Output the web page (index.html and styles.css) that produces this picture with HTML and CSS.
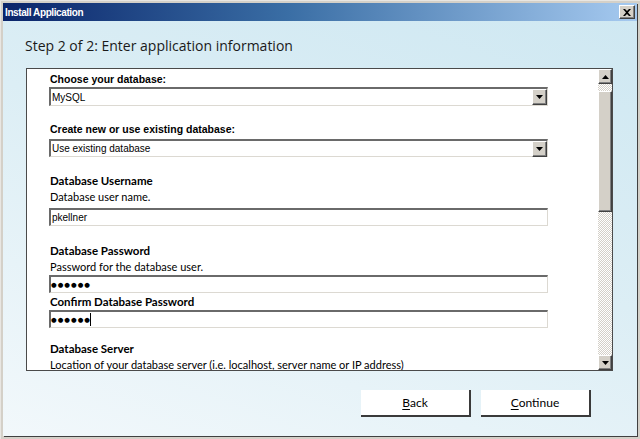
FILE: index.html
```html
<!DOCTYPE html>
<html>
<head>
<meta charset="utf-8">
<title>Install Application</title>
<link rel="stylesheet" href="styles.css">
</head>
<body>
<div class="window">
  <div class="inner">
    <div class="titlebar">
      <span class="title">Install Application</span>
      <span class="close"><svg width="8" height="7" viewBox="0 0 8 7"><path d="M0 0h2l2 2 2-2h2L5 3.5 8 7H6L4 5 2 7H0l3-3.5z" fill="#000"/></svg></span>
    </div>
    <div class="client">
      <h1 class="step">Step 2 of 2: Enter application information</h1>
      <div class="panel">
        <div class="form">
          <div class="label tahoma first">Choose your database:</div>
          <div class="combo c1"><span class="value">MySQL</span><span class="drop"><svg width="7" height="4" viewBox="0 0 7 4"><path d="M0 0h7L3.5 4z" fill="#000"/></svg></span></div>
          <div class="label tahoma l2">Create new or use existing database:</div>
          <div class="combo c2"><span class="value">Use existing database</span><span class="drop"><svg width="7" height="4" viewBox="0 0 7 4"><path d="M0 0h7L3.5 4z" fill="#000"/></svg></span></div>
          <div class="label l3">Database Username</div>
          <div class="desc">Database user name.</div>
          <div class="field f1"><span class="value">pkellner</span></div>
          <div class="label l4">Database Password</div>
          <div class="desc">Password for the database user.</div>
          <div class="field f2"><span class="value dots">●●●●●●</span></div>
          <div class="label l5">Confirm Database Password</div>
          <div class="field f3"><span class="value dots">●●●●●●</span><span class="caret"></span></div>
          <div class="label l6">Database Server</div>
          <div class="desc last">Location of your database server (i.e. localhost, server name or IP address)</div>
        </div>
        <div class="scrollbar">
          <div class="sb-btn"><svg width="7" height="4" viewBox="0 0 7 4"><path d="M3.5 0L7 4H0z" fill="#000"/></svg></div>
          <div class="sb-track">
            <div class="sb-gap"></div>
            <div class="sb-thumb"></div>
          </div>
          <div class="sb-btn"><svg width="7" height="4" viewBox="0 0 7 4"><path d="M0 0h7L3.5 4z" fill="#000"/></svg></div>
        </div>
      </div>
      <div class="buttons">
        <button class="btn"><u>B</u>ack</button>
        <button class="btn"><u>C</u>ontinue</button>
      </div>
    </div>
  </div>
</div>
</body>
</html>
```
FILE: styles.css
```css
* { box-sizing: border-box; }
html, body { margin: 0; padding: 0; background: #d4d0c8; }

.window {
  width: 640px;
  height: 439px;
  padding: 2px 3px 3px 2px;
  background: #d4d0c8;
  border-left: 1px solid #e8e6e2;
  border-top: 1px solid #e8e6e2;
}

.inner {
  width: 634px;
  height: 433px;
  display: flex;
  flex-direction: column;
  box-shadow: 1px 1px 0 #404040;
}

.titlebar {
  height: 18px;
  flex: none;
  display: flex;
  align-items: center;
  justify-content: space-between;
  padding: 0 2px 0 2px;
  background: linear-gradient(to right, #0a246a 0%, #3a6ea5 45%, #a6caf0 100%);
}

.title {
  color: #fff;
  font-family: "Liberation Sans", Arial, sans-serif;
  font-weight: bold;
  font-size: 10px;
  letter-spacing: -0.4px;
}

.close {
  width: 16px;
  height: 14px;
  display: flex;
  align-items: center;
  justify-content: center;
  background: #d4d0c8;
  border-top: 1px solid #fff;
  border-left: 1px solid #fff;
  border-right: 1px solid #404040;
  border-bottom: 1px solid #404040;
  box-shadow: inset -1px -1px 0 #808080;
}

.client {
  flex: 1;
  display: flex;
  flex-direction: column;
  padding: 0 24px 0 23px;
  background: linear-gradient(200deg, #cfe8f2 0%, #dceef5 45%, #f2f8fb 100%);
}

.step {
  margin: 15px 0 12px -1px;
  height: 20px;
  font-family: "Open Sans", sans-serif;
  font-weight: normal;
  font-size: 14px;
  line-height: 20px;
  color: #1a1a1a;
}

.panel {
  height: 303px;
  flex: none;
  display: flex;
  border: 1px solid #4a4a4a;
  background: #fff;
}

.form {
  flex: 1;
  overflow: hidden;
  padding: 3px 0 0 22px;
  color: #000;
}

.label {
  font-family: Lato, "Open Sans", sans-serif;
  font-weight: bold;
  font-size: 11.5px;
  line-height: 14px;
  height: 14px;
  padding-left: 1px;
}
.label.tahoma {
  font-family: "Liberation Sans", Arial, sans-serif;
  font-size: 10.5px;
}
.l2 { margin-top: 16px; }
.l3 { margin-top: 17px; }
.l4 { margin-top: 18px; }
.l5 { margin-top: 2px; }
.l6 { margin-top: 14px; }

.desc {
  font-family: Lato, "Open Sans", sans-serif;
  font-size: 11px;
  line-height: 14px;
  height: 14px;
  margin-top: 2px;
  padding-left: 1px;
  white-space: nowrap;
}
.desc.last { margin-top: 2px; }

.combo, .field {
  width: 499px;
  display: flex;
  align-items: center;
  justify-content: space-between;
  background: #fff;
  border-top: 2px solid #6a6a6a;
  border-left: 2px solid #6a6a6a;
  border-right: 1px solid #dcd9d2;
  border-bottom: 1px solid #dcd9d2;
  font-family: "Liberation Sans", Arial, sans-serif;
  font-size: 10px;
}
.combo { height: 19px; }
.field { height: 18px; justify-content: flex-start; }
.c1 { margin-top: 1px; }
.c2 { margin-top: 3px; height: 18px; }
.f1 { margin-top: 4px; }
.f2 { margin-top: 1px; }
.f3 { margin-top: 1px; }

.value { padding-left: 1px; }
.dots {
  font-family: "DejaVu Sans", sans-serif;
  font-size: 6.5px;
  letter-spacing: 1px;
  padding-left: 0;
}
.caret {
  width: 1px;
  height: 13px;
  background: #000;
  margin-left: -1px;
}

.drop {
  width: 15px;
  height: 16px;
  display: flex;
  align-items: center;
  justify-content: center;
  background: #d4d0c8;
  border-top: 1px solid #fff;
  border-left: 1px solid #fff;
  border-right: 1px solid #404040;
  border-bottom: 1px solid #404040;
  box-shadow: inset -1px -1px 0 #808080;
}

.scrollbar {
  width: 14px;
  flex: none;
  display: flex;
  flex-direction: column;
}
.sb-btn {
  height: 15px;
  flex: none;
  display: flex;
  align-items: center;
  justify-content: center;
  background: #d4d0c8;
  border-top: 1px solid #fff;
  border-left: 1px solid #fff;
  border-right: 1px solid #404040;
  border-bottom: 1px solid #404040;
  box-shadow: inset -1px -1px 0 #808080;
}
.sb-track {
  flex: 1;
  display: flex;
  flex-direction: column;
  background: repeating-conic-gradient(#d4d0c8 0 25%, #fff 0 50%) 0 0 / 2px 2px;
}
.sb-gap { height: 7px; flex: none; }
.sb-thumb {
  height: 121px;
  flex: none;
  background: #d4d0c8;
  border-top: 1px solid #fff;
  border-left: 1px solid #fff;
  border-right: 1px solid #404040;
  border-bottom: 1px solid #404040;
  box-shadow: inset -1px -1px 0 #808080;
}

.buttons {
  display: flex;
  justify-content: flex-end;
  gap: 10px;
  margin-top: 19px;
  padding-right: 22px;
}
.btn {
  width: 110px;
  height: 27px;
  margin: 0;
  padding: 0;
  background: #fff;
  border: none;
  border-right: 2px solid #3a3a3a;
  border-bottom: 2px solid #3a3a3a;
  font-family: Lato, "Open Sans", sans-serif;
  font-size: 12px;
  color: #000;
}
.btn u { text-decoration: underline; text-underline-offset: 2px; }
```
